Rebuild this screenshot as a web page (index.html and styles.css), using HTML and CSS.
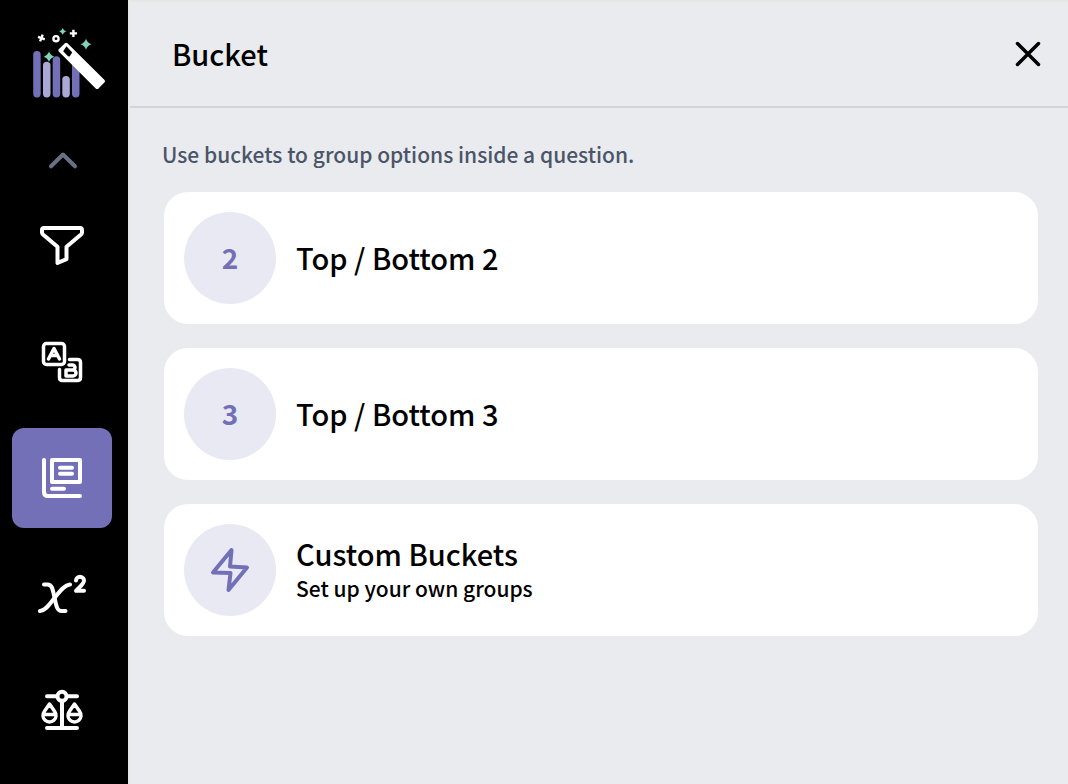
FILE: index.html
```
<!DOCTYPE html>
<html lang="en">
<head>
    <meta charset="UTF-8">
    <meta name="viewport" content="width=device-width, initial-scale=1.0">
    <title>Bucket</title>
    <link rel="stylesheet" href="styles.css">
</head>
<body>
    <aside class="sidebar">
        <a href="#" class="logo" aria-label="Home">
            <svg width="72" height="72" viewBox="0 0 72 72">
                <g fill="#7370b7">
                    <rect x="0.2" y="23" width="7.5" height="46.5" rx="3.7"/>
                    <rect x="19.7" y="28.3" width="7.5" height="41.2" rx="3.7"/>
                    <rect x="39" y="33" width="7.5" height="36.5" rx="3.7"/>
                </g>
                <g fill="#aaa9d3">
                    <rect x="10" y="33.7" width="7.5" height="35.8" rx="3.7"/>
                    <rect x="29.3" y="48" width="7.5" height="21.5" rx="3.7"/>
                </g>
                <path fill="#fff" d="M31.9 15.2q1.4-1 2.8.2L71.3 51.8q1.4 1.4 0 2.8l-5.8 5.8q-1.4 1.4-2.8 0L26 23.7q-1.4-1.4 0-2.8z"/>
                <path fill="#000" d="M33.5 18.2l5.7 6.2-2.6 4.2-1.6-.4-4.8-5z"/>
                <g fill="#7ed3ba">
                    <path d="M29.7 0q.8 2.6 3.4 3.4-2.6.8-3.4 3.4-.8-2.6-3.4-3.4 2.6-.8 3.4-3.4z"/>
                    <path d="M53 10.8q1.4 4.2 5.5 5.5-4.1 1.4-5.5 5.5-1.4-4.1-5.5-5.5 4.1-1.3 5.5-5.5z"/>
                    <path stroke="#000" stroke-width="0.5" d="M16 23q1.4 4.3 5.7 5.7-4.3 1.4-5.7 5.7-1.4-4.3-5.7-5.7 4.3-1.4 5.7-5.7z"/>
                </g>
                <g fill="none" stroke="#fff" stroke-width="2.4">
                    <circle cx="23" cy="10.7" r="2.6"/>
                    <path d="M40.4 1.8v7.2M36.8 5.4h7.2M5 8.8l6.8 2.6M9.7 6.6l-2.6 6.8"/>
                </g>
            </svg>
        </a>
        <button class="scroll-up" aria-label="Scroll up">
            <svg width="32" height="32" viewBox="0 0 32 32">
                <path d="M5 22.3l12-11.8 12 11.8" stroke-width="4"/>
            </svg>
        </button>
        <nav class="tools">
            <button class="tool" aria-label="Filter">
                <svg width="48" height="48" viewBox="0 0 48 48">
                    <path stroke-width="4" d="M6 6h36q2 0 2 2v2.5q0 1-1 2L28.5 24.7v12.5L19.5 41V24.7L5 12.5q-1-1-1-2V8q0-2 2-2z"/>
                </svg>
            </button>
            <button class="tool" aria-label="Compare">
                <svg width="48" height="48" viewBox="0 0 48 48">
                    <rect x="5.5" y="5.5" width="21" height="21" rx="3"/>
                    <path d="M10.500 21L16 10.500 21.500 21M13 17.500h6"/>
                    <path d="M31.500 21.500h8q3 0 3 3v15q0 3-3 3h-15q-3 0-3-3v-8"/>
                    <path d="M31 27h3.500a2.500 2.500 0 0 1 0 5H28v6h7a3 3 0 0 0 0-6"/>
                </svg>
            </button>
            <button class="tool active" aria-label="Bucket">
                <svg width="48" height="48" viewBox="0 0 48 48">
                    <path stroke-width="4" d="M6 6v32q0 4 4 4h32"/>
                    <path stroke-width="4" d="M14 6h28v22H14zM22 13.700h12M22 19.700h12M14 34.700h12"/>
                </svg>
            </button>
            <button class="tool" aria-label="Chi squared">
                <svg width="48" height="48" viewBox="0 0 48 48">
                    <g stroke-width="4">
                        <path d="M6 14.500h3.500c4 0 5 3 7 13s3 13.500 7 13.500h4"/>
                        <path d="M32 14.500c-6 .5-11 8-15.500 13.500S8 40.500 2 41"/>
                        <path d="M38 10.500a4 3.700 0 0 1 8 0c0 3.500-4 6-8 10.300h8"/>
                    </g>
                </svg>
            </button>
            <button class="tool" aria-label="Weighting">
                <svg width="48" height="48" viewBox="0 0 48 48">
                    <circle cx="24" cy="10.300" r="4.500" stroke-width="4"/>
                    <path stroke-width="4" d="M9 10.300h10M29 10.300h10M24 15v26M9 42h30"/>
                    <path d="M11.500 18L6.300 25.500a6.500 6.500 0 1 0 10.400 0zM6 28.500h11"/>
                    <path d="M36.500 18l-5.200 7.500a6.500 6.500 0 1 0 10.400 0zM31 28.500h11"/>
                </svg>
            </button>
        </nav>
    </aside>

    <main class="panel">
        <header class="panel-header">
            <h1>Bucket</h1>
            <button class="close-btn" aria-label="Close">
                <svg width="32" height="32" viewBox="0 0 32 32">
                    <path d="M5.500 5.500l21 21M26.500 5.500l-21 21"/>
                </svg>
            </button>
        </header>
        <div class="panel-body">
            <p class="hint">Use buckets to group options inside a question.</p>
            <div class="options">
                <button class="option">
                    <span class="badge">2</span>
                    <span class="option-text">
                        <span class="option-title">Top / Bottom 2</span>
                    </span>
                </button>
                <button class="option">
                    <span class="badge">3</span>
                    <span class="option-text">
                        <span class="option-title">Top / Bottom 3</span>
                    </span>
                </button>
                <button class="option">
                    <span class="badge">
                        <svg width="48" height="48" viewBox="0 0 48 48">
                            <path d="M25.500 4L7 26.500l17.500.500L22.500 44 41 21.500 24 20.500z"/>
                        </svg>
                    </span>
                    <span class="option-text">
                        <span class="option-title">Custom Buckets</span>
                        <span class="option-note">Set up your own groups</span>
                    </span>
                </button>
            </div>
        </div>
    </main>
</body>
</html>
```
FILE: styles.css
```
* {
    margin: 0;
    padding: 0;
    box-sizing: border-box;
}

body {
    display: flex;
    min-height: 100vh;
    background: #eaebef;
    color: #000;
    font-family: 'Noto Sans CJK JP', 'Open Sans', sans-serif;
}

button {
    border: none;
    background: none;
    color: inherit;
    font-family: inherit;
    cursor: pointer;
}

svg {
    display: block;
    fill: none;
    stroke: currentColor;
    stroke-width: 3.5;
    stroke-linecap: round;
    stroke-linejoin: round;
}

/* sidebar */
.sidebar {
    flex: none;
    width: 128px;
    padding: 28px 16px 24px 12px;
    display: flex;
    flex-direction: column;
    align-items: center;
    background: #000;
    color: #fff;
}

.logo {
    padding-left: 14px;
}

.logo svg {
    stroke: none;
    stroke-linecap: butt;
}

.scroll-up {
    margin: 44px 0 20px;
    color: #697083;
}

.tools {
    display: flex;
    flex-direction: column;
    gap: 16px;
}

.tool {
    width: 100px;
    height: 100px;
    display: flex;
    justify-content: center;
    align-items: center;
    border-radius: 12px;
}

.tool.active {
    background: #7370b7;
}

/* panel */
.panel {
    flex: 1;
    border-top: 2px solid #e5e7e7;
    border-left: 2px solid #e5e7e7;
}

.panel-header {
    display: flex;
    justify-content: space-between;
    align-items: center;
    padding: 32px 24px 32px 42px;
    border-bottom: 2px solid #d1d5db;
}

h1 {
    padding-bottom: 2px;
    font-size: 29px;
    font-weight: 500;
    line-height: 38px;
}

.panel-body {
    padding: 30px 30px 32px 32px;
}

.hint {
    font-size: 21px;
    font-weight: 500;
    line-height: 32px;
    color: #4b5568;
}

.options {
    display: flex;
    flex-direction: column;
    gap: 24px;
    padding: 22px 0 0 2px;
}

.option {
    display: flex;
    align-items: center;
    gap: 20px;
    padding: 20px;
    border-radius: 24px;
    background: #fff;
    text-align: left;
}

.badge {
    flex: none;
    width: 92px;
    height: 92px;
    display: flex;
    justify-content: center;
    align-items: center;
    border-radius: 50%;
    background: #e9e9f4;
    color: #7370b7;
    font-size: 28px;
    font-weight: 700;
    line-height: 38px;
}

.badge:not(:has(svg)) {
    padding-bottom: 2px;
}

.badge svg {
    stroke-width: 4;
}

.option-text {
    display: flex;
    flex-direction: column;
    padding-bottom: 2px;
}

.option-title {
    font-size: 29px;
    font-weight: 500;
    line-height: 38px;
}

.option-note {
    font-size: 21px;
    font-weight: 500;
    line-height: 32px;
}
```
